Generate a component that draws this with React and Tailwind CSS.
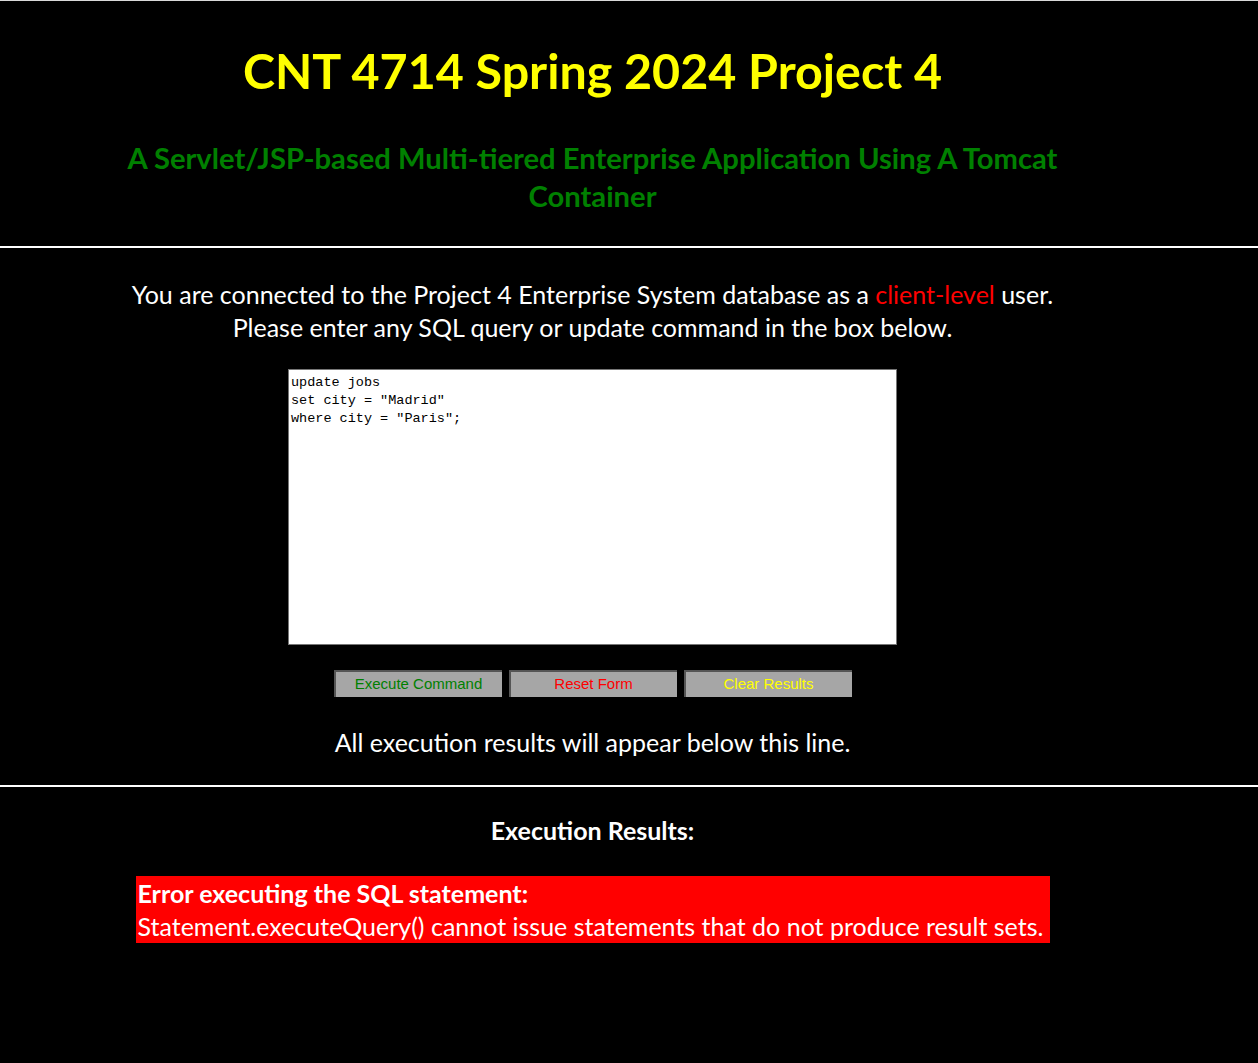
import { useState } from 'react'

export default function App() {
  const [query, setQuery] = useState('update jobs\nset city = "Madrid"\nwhere city = "Paris";')

  return (
    <div className="min-h-[1063px] bg-black border-t border-[#d9d9d9] font-['Lato',sans-serif]">
      <div className="w-[1185px] text-center">
        <h1 className="mt-[39px] text-[48.4px] leading-[60px] font-bold text-[#ffff00]">
          CNT 4714 Spring 2024 Project 4
        </h1>
        <h2 className="mt-[39px] text-[29.2px] leading-[38px] font-bold text-[#008000]">
          A Servlet/JSP-based Multi-tiered Enterprise Application Using A Tomcat
          <br />
          Container
        </h2>
      </div>

      <div className="mt-[31px] h-[2px] bg-white"></div>

      <div className="w-[1185px] text-center">
        <p className="mt-[30px] text-[25px] leading-[33px] text-white">
          You are connected to the Project 4 Enterprise System database as a{' '}
          <span className="text-[#ff0000]">client-level</span> user.
          <br />
          Please enter any SQL query or update command in the box below.
        </p>

        <textarea
          value={query}
          onChange={(e) => setQuery(e.target.value)}
          className="mt-[25px] block mx-auto w-[609px] h-[276px] resize-none bg-white border border-[#767676] px-[2px] pt-[4px] text-left text-black text-[13.5px] leading-[18px] font-['Liberation_Mono',monospace] outline-none"
        />

        <div className="mt-[25px] flex justify-center gap-[7px] font-['Liberation_Sans',Arial,sans-serif] text-[15px]">
          <button className="w-[168px] h-[27px] bg-[#a6a6a6] border-t-2 border-l-2 border-[#555555] text-[#008000]">
            Execute Command
          </button>
          <button className="w-[168px] h-[27px] bg-[#a6a6a6] border-t-2 border-l-2 border-[#555555] text-[#ff0000]">
            Reset Form
          </button>
          <button className="w-[168px] h-[27px] bg-[#a6a6a6] border-t-2 border-l-2 border-[#555555] text-[#ffff00]">
            Clear Results
          </button>
        </div>

        <p className="mt-[29px] text-[25px] leading-[33px] text-white">
          All execution results will appear below this line.
        </p>
      </div>

      <div className="mt-[26px] h-[2px] bg-white"></div>

      <div className="w-[1185px] text-center">
        <h3 className="mt-[27px] text-[25px] leading-[33px] font-bold text-white">Execution Results:</h3>
        <div className="mt-[29px] mx-auto w-[914px] bg-[#ff0000] text-left px-[2px] pt-[1px] text-[25px] leading-[33px] text-white">
          <span className="font-bold">Error executing the SQL statement:</span>
          <br />
          Statement.executeQuery() cannot issue statements that do not produce result sets.
        </div>
      </div>
    </div>
  )
}
